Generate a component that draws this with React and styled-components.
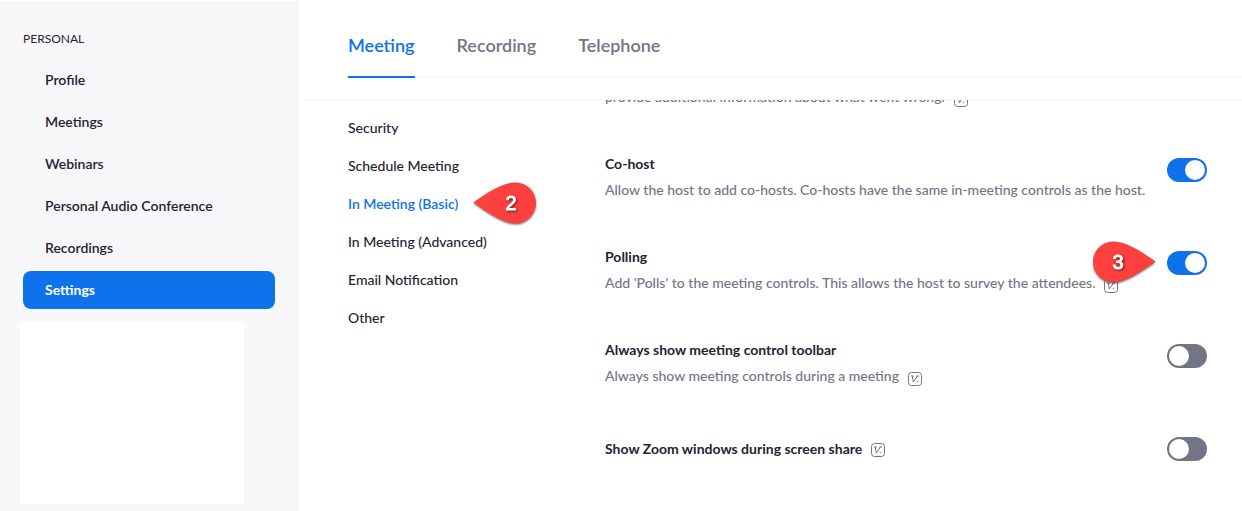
import React from 'react'
import styled, { createGlobalStyle } from 'styled-components'

const Global = createGlobalStyle`
  * {
    box-sizing: border-box;
  }
  body {
    margin: 0;
    background: #fff;
    color: #232333;
    font-family: Lato, 'Open Sans', sans-serif;
    font-size: 14px;
  }
`
const Page = styled.div`
  display: flex;
  height: 100vh;
  overflow: hidden;
`
const Sidebar = styled.aside`
  flex: 0 0 299px;
  margin-top: 1px;
  padding: 28px 24px 0 23px;
  background: #f7f7fa;
`
const SideTitle = styled.p`
  margin: 0 0 12px;
  font-size: 12px;
  line-height: 20px;
`
const SideNav = styled.nav`
  display: flex;
  flex-direction: column;
  gap: 4px;
`
const SideLink = styled.a`
  padding-left: 22px;
  border-radius: 8px;
  background: ${(p) => (p.$active ? '#0e72ed' : 'transparent')};
  color: ${(p) => (p.$active ? '#fff' : '#232333')};
  font-weight: ${(p) => (p.$active ? 700 : 600)};
  line-height: 38px;
  text-decoration: none;
`
const SideBlank = styled.div`
  width: 224px;
  height: 182px;
  margin: 13px 0 0 -3px;
  background: #fff;
`
const Main = styled.main`
  flex: 1;
  min-width: 0;
  margin-left: 1px;
`
const Header = styled.header`
  position: relative;
  z-index: 1;
  height: 100px;
  padding-left: 48px;
  border-bottom: 1px solid #f5f5f8;
  background: #fff;
`
const Tabs = styled.nav`
  display: flex;
  gap: 42px;
  height: 78px;
  padding-top: 14px;
  border-bottom: 2px solid #f7f7fa;
`
const Tab = styled.a`
  height: 64px;
  border-bottom: 2px solid ${(p) => (p.$active ? '#0e72ed' : 'transparent')};
  color: ${(p) => (p.$active ? '#0e72ed' : '#747487')};
  font-size: 18px;
  font-weight: 600;
  line-height: 62px;
  text-decoration: none;
`
const Body = styled.div`
  display: flex;
  padding: 0 35px 0 48px;
`
const SubNav = styled.nav`
  flex: 0 0 257px;
  padding-top: 9px;
`
const SubItem = styled.div`
  position: relative;
  line-height: 38px;
`
const SubLink = styled.a`
  color: ${(p) => (p.$active ? '#0e72ed' : '#232333')};
  font-weight: ${(p) => (p.$active ? 600 : 500)};
  text-decoration: none;
`
const Options = styled.section`
  display: flex;
  flex: 1;
  flex-direction: column;
  gap: 41px;
  min-width: 0;
  margin-top: -16px;
`
const Row = styled.div`
  position: relative;
  display: flex;
  justify-content: space-between;
`
const RowText = styled.div`
  display: flex;
  flex-direction: column;
  justify-content: center;
  min-height: ${(p) => (p.$titleOnly ? '38px' : '0')};
  line-height: 26px;
`
const RowTitle = styled.label`
  font-weight: 700;
`
const RowDesc = styled.p`
  margin: 0;
  color: #747487;
  font-weight: 500;
`
const Switch = styled.input`
  flex: none;
  width: 40px;
  height: 24px;
  margin: 7px 0 0;
  padding: 2px;
  border-radius: 12px;
  appearance: none;
  background: #747487;
  cursor: pointer;
  &::before {
    display: block;
    width: 20px;
    height: 20px;
    border-radius: 50%;
    background: #fff;
    content: '';
  }
  &:checked {
    background: #0e72ed;
  }
  &:checked::before {
    margin-left: 16px;
  }
`
const Mark = styled.svg`
  width: 14px;
  height: 14px;
  margin-left: 9px;
  vertical-align: ${(p) => (p.$low ? '-5px' : '-3px')};
`
const Pin = styled.span`
  position: absolute;
  top: -3px;
  ${(p) => (p.$side === 'left' ? 'left: 125px;' : 'right: 50px;')}
  width: 64px;
  height: 44px;
  line-height: 0;
`
const PinShape = styled.g`
  filter: drop-shadow(0 1px 1px rgba(0, 0, 0, 0.6));
`
const PinNumber = styled.text`
  fill: #fff;
  font-family: 'Liberation Sans', Arial, sans-serif;
  font-size: 20px;
  text-anchor: middle;
  stroke: #fff;
  stroke-width: 1px;
  filter: drop-shadow(1px 1px 1px rgba(0, 0, 0, 0.6));
`

const sideLinks = [
  'Profile',
  'Meetings',
  'Webinars',
  'Personal Audio Conference',
  'Recordings',
  'Settings',
]
const tabs = ['Meeting', 'Recording', 'Telephone']
const subLinks = [
  { text: 'Security' },
  { text: 'Schedule Meeting' },
  { text: 'In Meeting (Basic)', pin: 2 },
  { text: 'In Meeting (Advanced)' },
  { text: 'Email Notification' },
  { text: 'Other' },
]
const options = [
  {
    id: 'cohost',
    title: 'Co-host',
    desc: 'Allow the host to add co-hosts. Co-hosts have the same in-meeting controls as the host.',
    on: true,
  },
  {
    id: 'polling',
    title: 'Polling',
    desc: "Add 'Polls' to the meeting controls. This allows the host to survey the attendees.",
    on: true,
    mark: true,
    pin: 3,
  },
  {
    id: 'toolbar',
    title: 'Always show meeting control toolbar',
    desc: 'Always show meeting controls during a meeting',
    mark: true,
  },
  { id: 'windows', title: 'Show Zoom windows during screen share', mark: true },
]

const ChangedMark = ({ low }) => (
  <Mark $low={low} viewBox="0 0 14 14" fill="none" stroke="#747487" aria-hidden="true">
    <rect x="0.5" y="0.5" width="13" height="13" rx="3" />
    <path d="M3 4h2.6M4.3 4l1 6 4.2-6M8.2 4h2.8" />
    <circle cx="9.5" cy="9.6" r="0.5" strokeWidth="0.6" />
  </Mark>
)

const Callout = ({ number, side }) => (
  <Pin $side={side}>
    <svg width="64" height="44" viewBox="0 0 64 44">
      <PinShape>
        <path
          d="M0.5 20.5C14 11 30 0.5 42.5 0.5a20.5 20.5 0 0 1 0 41C30 41.5 14 30 0.5 20.5z"
          fill="#fc403d"
          transform={side === 'right' ? 'translate(63 0) scale(-1 1)' : undefined}
        />
      </PinShape>
      <PinNumber x={side === 'right' ? 25 : 38} y="28">
        {number}
      </PinNumber>
    </svg>
  </Pin>
)

export default () => (
  <>
    <Global />
    <Page>
      <Sidebar>
        <SideTitle>PERSONAL</SideTitle>
        <SideNav>
          {sideLinks.map((text) => (
            <SideLink key={text} href="#" $active={text === 'Settings'}>
              {text}
            </SideLink>
          ))}
        </SideNav>
        <SideBlank />
      </Sidebar>
      <Main>
        <Header>
          <Tabs>
            {tabs.map((text) => (
              <Tab key={text} href="#" $active={text === 'Meeting'}>
                {text}
              </Tab>
            ))}
          </Tabs>
        </Header>
        <Body>
          <SubNav>
            {subLinks.map(({ text, pin }) => (
              <SubItem key={text}>
                <SubLink href="#" $active={!!pin}>
                  {text}
                </SubLink>
                {pin && <Callout number={pin} side="left" />}
              </SubItem>
            ))}
          </SubNav>
          <Options>
            <RowText>
              <RowDesc>
                provide additional information about what went wrong.
                <ChangedMark low />
              </RowDesc>
            </RowText>
            {options.map(({ id, title, desc, on, mark, pin }) => (
              <Row key={id}>
                <RowText $titleOnly={!desc}>
                  <RowTitle htmlFor={id}>
                    {title}
                    {!desc && mark && <ChangedMark />}
                  </RowTitle>
                  {desc && (
                    <RowDesc>
                      {desc}
                      {mark && <ChangedMark low />}
                    </RowDesc>
                  )}
                </RowText>
                <Switch id={id} type="checkbox" defaultChecked={on} />
                {pin && <Callout number={pin} side="right" />}
              </Row>
            ))}
          </Options>
        </Body>
      </Main>
    </Page>
  </>
)
